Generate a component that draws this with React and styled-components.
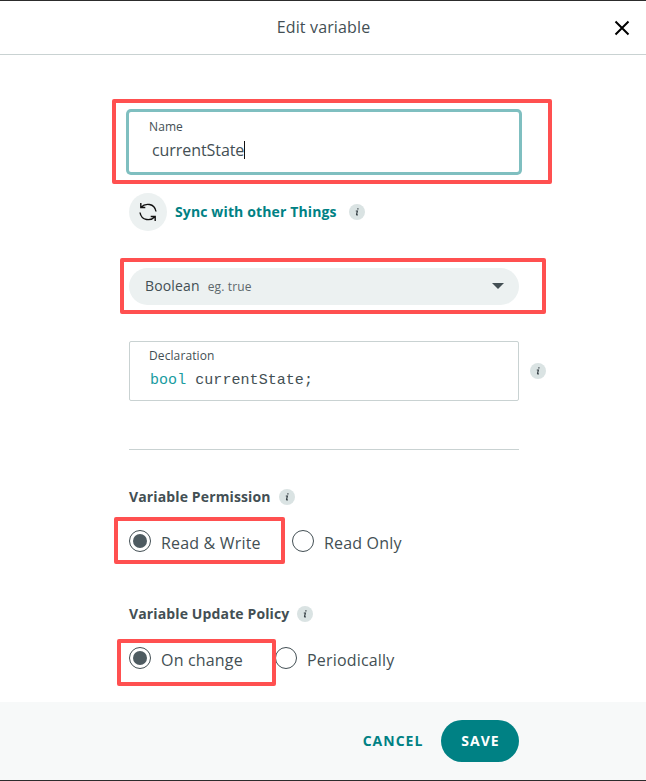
import React from "react";
import styled, { createGlobalStyle, css } from "styled-components";

const Global = createGlobalStyle`
  * { box-sizing: border-box; }
  body { margin: 0; background: #fff; font-family: "Open Sans", "Noto Sans", sans-serif; color: #434f54; }
`;

const Dialog = styled.div`
  width: 646px;
  height: 781px;
  display: flex;
  flex-direction: column;
  background: #fff;
  border-top: 1px solid #2c2c2c;
  border-bottom: 1px solid #2c2c2c;
  overflow: hidden;
`;
const Header = styled.header`
  height: 54px;
  flex: none;
  display: grid;
  grid-template-columns: 48px 1fr 48px;
  align-items: center;
  border-bottom: 1px solid #c9d2d2;
`;
const Title = styled.h1`
  grid-column: 2;
  margin: 0 0 2px;
  padding-left: 1px;
  text-align: center;
  font-size: 16px;
  line-height: 22px;
  font-weight: 400;
  letter-spacing: 0.14px;
`;
const CloseButton = styled.button`
  border: 0;
  padding: 0;
  background: none;
  display: grid;
  place-items: center;
  color: #000;
`;
const Body = styled.main`
  flex: 1;
  padding: 57px 127px 0 129px;
`;
const Annotated = styled.div`
  position: relative;
`;
const Highlight = styled.span`
  position: absolute;
  z-index: 2;
  top: ${(p) => p.$top}px;
  left: ${(p) => p.$left}px;
  width: ${(p) => p.$w}px;
  height: ${(p) => p.$h}px;
  border: 4px solid #ff5050;
  border-radius: 2px;
  pointer-events: none;
`;
const Field = styled.div`
  height: 60px;
  padding: 6px 20px 0;
  background: #fff;
  ${(p) =>
    p.$focused
      ? css`
          border-radius: 2px;
          box-shadow: 0 0 0 3px #7fbfc0;
        `
      : css`
          border: 1px solid #c9d2d2;
          border-radius: 2px;
          padding: 5px 19px 0;
        `}
`;
const FieldLabel = styled.div`
  font-size: 12px;
  line-height: 17px;
  letter-spacing: 0.1px;
`;
const FieldValue = styled.div`
  display: flex;
  align-items: center;
  margin: 3px 0 0 3px;
  font-size: 16px;
  line-height: 24px;
  letter-spacing: -0.07px;
`;
const Caret = styled.span`
  width: 1px;
  height: 18px;
  background: #111;
`;
const Code = styled.code`
  display: block;
  margin: 6px 0 0 1px;
  font: 15px/22px "Liberation Mono", monospace;
  letter-spacing: 0.05px;
  white-space: pre;
`;
const Keyword = styled.span`
  color: #1a9c9f;
`;
const SyncRow = styled.div`
  display: flex;
  align-items: center;
  height: 38px;
  margin-top: 21px;
`;
const RoundIcon = styled.span`
  width: 38px;
  height: 38px;
  border-radius: 50%;
  background: #ecf1f1;
  display: grid;
  place-items: center;
  margin-right: 8px;
`;
const SyncLabel = styled.span`
  width: 162px;
  white-space: nowrap;
  font-size: 14px;
  font-weight: 700;
  letter-spacing: 0.13px;
  color: #008184;
  margin: 0 12px 2px 0;
`;
const InfoDot = styled.span`
  flex: none;
  width: 16px;
  height: 16px;
  border-radius: 50%;
  background: #dae3e3;
  display: grid;
  place-items: center;
`;
const Select = styled.div`
  height: 37px;
  margin-top: 37px;
  padding: 0 15px 0 16px;
  border-radius: 19px;
  background: #ecf1f1;
  display: flex;
  align-items: center;
  font-size: 14px;
  letter-spacing: 0.15px;
`;
const SelectedType = styled.span`
  margin-bottom: 2px;
`;
const Example = styled.span`
  margin-left: 8px;
  font-size: 12px;
  flex: 1;
  color: #5d686c;
`;
const DeclarationRow = styled.div`
  display: grid;
  grid-template-columns: 390px 16px;
  gap: 11px;
  align-items: center;
  margin-top: 36px;
`;
const Divider = styled.hr`
  height: 1px;
  border: 0;
  margin: 48px 0 37px;
  background: #c9d2d2;
`;
const SectionTitle = styled.h2`
  display: flex;
  align-items: center;
  gap: 8px;
  height: 20px;
  margin: 0;
  font-size: 14px;
  font-weight: 700;
  letter-spacing: 0.13px;
  white-space: nowrap;
  margin-top: ${(p) => p.$space || 0}px;
`;
const TitleText = styled.span`
  width: ${(p) => p.$w}px;
  margin-bottom: 2px;
`;
const RadioRow = styled.div`
  display: flex;
  height: 26px;
  margin-top: 23px;
`;
const Option = styled.label`
  display: flex;
  width: ${(p) => p.$w}px;
  gap: 10px;
  font-size: 16px;
  line-height: 26px;
  letter-spacing: 0.18px;
  white-space: nowrap;
`;
const Radio = styled.span`
  flex: none;
  width: 22px;
  height: 22px;
  padding: 3px;
  border: 1px solid #434f54;
  border-radius: 50%;
  background: ${(p) => (p.$on ? "#4e5b61" : "#fff")} content-box;
`;
const Footer = styled.footer`
  flex: none;
  height: 78px;
  display: flex;
  align-items: center;
  justify-content: flex-end;
  padding-right: 127px;
  background: #f7f9f9;
`;
const Action = styled.button`
  height: 42px;
  width: ${(p) => (p.$primary ? 78 : 97)}px;
  padding: 0 0 2px 1px;
  border: 0;
  border-radius: 21px;
  background: ${(p) => (p.$primary ? "#008184" : "transparent")};
  color: ${(p) => (p.$primary ? "#fff" : "#008184")};
  font: 700 14px "Open Sans", sans-serif;
  letter-spacing: 1px;
`;

function Info() {
  return (
    <InfoDot>
      <svg width="16" height="16" viewBox="0 0 16 16" fill="none" stroke="#374146">
        <path d="M6.8 7h1.6l-.9 3.6q0 .6 1.3 0" strokeWidth="1.2" />
        <path d="M8.9 4.2v1.3" strokeWidth="1.3" />
      </svg>
    </InfoDot>
  );
}

function SyncIcon() {
  return (
    <svg width="20" height="20" viewBox="0 0 20 20" fill="none" stroke="#111" strokeWidth="1.4">
      <path d="M2.8 1v4.500h4.500M3 5.200C7 1 16.500 .8 18 9.500" />
      <path d="M17.200 19v-4.500h-4.500M17 14.800C13 19 3.500 19.200 2 10.500" />
    </svg>
  );
}

export default function App() {
  return (
    <>
      <Global />
      <Dialog>
        <Header>
          <Title>Edit variable</Title>
          <CloseButton aria-label="Close">
            <svg width="16" height="16" viewBox="0 0 16 16" stroke="#000" strokeWidth="2">
              <path d="M1.500 1.500l13 13M14.500 1.500l-13 13" />
            </svg>
          </CloseButton>
        </Header>
        <Body>
          <Annotated>
            <Field $focused>
              <FieldLabel>Name</FieldLabel>
              <FieldValue>
                currentState
                <Caret />
              </FieldValue>
            </Field>
            <Highlight $top={-13} $left={-17} $w={440} $h={85} />
          </Annotated>
          <SyncRow>
            <RoundIcon>
              <SyncIcon />
            </RoundIcon>
            <SyncLabel>Sync with other Things</SyncLabel>
            <Info />
          </SyncRow>
          <Annotated>
            <Select>
              <SelectedType>Boolean</SelectedType>
              <Example>eg. true</Example>
              <svg width="12" height="7" viewBox="0 0 12 7" fill="#434f54">
                <path d="M0 0h12L6 6z" />
              </svg>
            </Select>
            <Highlight $top={-10} $left={-9} $w={426} $h={56} />
          </Annotated>
          <DeclarationRow>
            <Field>
              <FieldLabel>Declaration</FieldLabel>
              <Code>
                <Keyword>bool</Keyword> currentState;
              </Code>
            </Field>
            <Info />
          </DeclarationRow>
          <Divider />
          <SectionTitle>
            <TitleText $w={142}>Variable Permission</TitleText>
            <Info />
          </SectionTitle>
          <Annotated>
            <RadioRow>
              <Option $w={163}>
                <Radio $on />
                Read &amp; Write
              </Option>
              <Option>
                <Radio />
                Read Only
              </Option>
            </RadioRow>
            <Highlight $top={-13} $left={-15} $w={171} $h={47} />
          </Annotated>
          <SectionTitle $space={48}>
            <TitleText $w={160}>Variable Update Policy</TitleText>
            <Info />
          </SectionTitle>
          <Annotated>
            <RadioRow>
              <Option $w={146}>
                <Radio $on />
                On change
              </Option>
              <Option>
                <Radio />
                Periodically
              </Option>
            </RadioRow>
            <Highlight $top={-8} $left={-12} $w={159} $h={47} />
          </Annotated>
        </Body>
        <Footer>
          <Action>CANCEL</Action>
          <Action $primary>SAVE</Action>
        </Footer>
      </Dialog>
    </>
  );
}
